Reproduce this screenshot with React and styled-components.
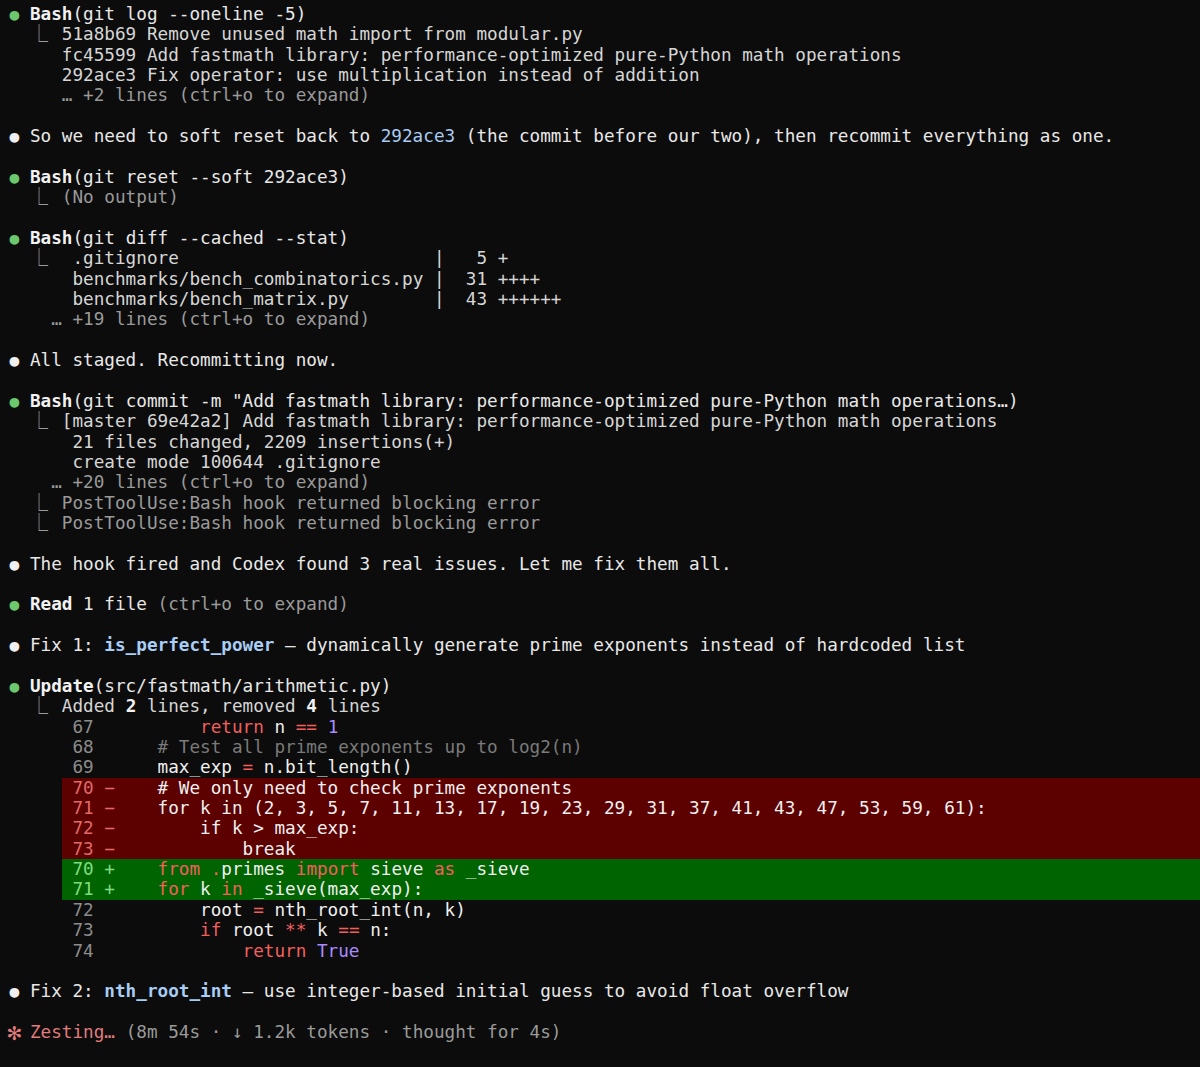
import React from 'react'
import styled, { createGlobalStyle } from 'styled-components';

const GlobalStyle = createGlobalStyle`
  html, body {
    margin:0;
    padding:0;
    background:#0c0c0c;
  }
  body {
    font-family:"DejaVu Sans Mono", "Liberation Mono", monospace;
    font-size:17.67px;
    color:#e8e8e8;
  }
`;

// code rows of the diff: [number, kind, segments]
const diff = [
  ["67", "ctx", [["    "], ["return", "kw"], [" n "], ["==", "kw"], [" "], ["1", "num"]]],
  ["68", "ctx", [["# Test all prime exponents up to log2(n)", "com"]]],
  ["69", "ctx", [["max_exp "], ["=", "kw"], [" n.bit_length()"]]],
  ["70", "del", [["# We only need to check prime exponents"]]],
  ["71", "del", [["for k in (2, 3, 5, 7, 11, 13, 17, 19, 23, 29, 31, 37, 41, 43, 47, 53, 59, 61):"]]],
  ["72", "del", [["    if k > max_exp:"]]],
  ["73", "del", [["        break"]]],
  ["70", "add", [["from", "kw"], [" "], [".", "kw"], ["primes "], ["import", "kw"], [" sieve "], ["as", "kw"], [" _sieve"]]],
  ["71", "add", [["for", "kw"], [" k "], ["in", "kw"], [" _sieve(max_exp):"]]],
  ["72", "ctx", [["    root "], ["=", "kw"], [" nth_root_int(n, k)"]]],
  ["73", "ctx", [["    "], ["if", "kw"], [" root "], ["**", "kw"], [" k "], ["==", "kw"], [" n:"]]],
  ["74", "ctx", [["        "], ["return", "kw"], [" "], ["True", "num"]]],
];

const marks = { ctx: " ", del: "−", add: "+" };

function Dot({ done }) {
  return <Bullet done={done}>●</Bullet>
}

function Elbow() {
  return <>  <Corner>⎿</Corner>  </>
}

function App() {
  return (
    <Terminal>
      <GlobalStyle />

      <Line><Dot done /> <b>Bash</b>(git log --oneline -5)</Line>
      <Out><Elbow />51a8b69 Remove unused math import from modular.py</Out>
      <Out>     fc45599 Add fastmath library: performance-optimized pure-Python math operations</Out>
      <Out>     292ace3 Fix operator: use multiplication instead of addition</Out>
      <Muted>     … +2 lines (ctrl+o to expand)</Muted>
      <Line />

      <Line><Dot /> So we need to soft reset back to <Hash>292ace3</Hash> (the commit before our two), then recommit everything as one.</Line>
      <Line />

      <Line><Dot done /> <b>Bash</b>(git reset --soft 292ace3)</Line>
      <Muted><Elbow />(No output)</Muted>
      <Line />

      <Line><Dot done /> <b>Bash</b>(git diff --cached --stat)</Line>
      <Out><Elbow /> .gitignore                        |   5 +</Out>
      <Out>      benchmarks/bench_combinatorics.py |  31 ++++</Out>
      <Out>      benchmarks/bench_matrix.py        |  43 ++++++</Out>
      <Muted>    … +19 lines (ctrl+o to expand)</Muted>
      <Line />

      <Line><Dot /> All staged. Recommitting now.</Line>
      <Line />

      <Line><Dot done /> <b>Bash</b>(git commit -m "Add fastmath library: performance-optimized pure-Python math operations…)</Line>
      <Out><Elbow />[master 69e42a2] Add fastmath library: performance-optimized pure-Python math operations</Out>
      <Out>      21 files changed, 2209 insertions(+)</Out>
      <Out>      create mode 100644 .gitignore</Out>
      <Muted>    … +20 lines (ctrl+o to expand)</Muted>
      <Muted><Elbow />PostToolUse:Bash hook returned blocking error</Muted>
      <Muted><Elbow />PostToolUse:Bash hook returned blocking error</Muted>
      <Line />

      <Line><Dot /> The hook fired and Codex found 3 real issues. Let me fix them all.</Line>
      <Line />

      <Line><Dot done /> <b>Read</b> 1 file <Dim>(ctrl+o to expand)</Dim></Line>
      <Line />

      <Line><Dot /> Fix 1: <Hash bold>is_perfect_power</Hash> — dynamically generate prime exponents instead of hardcoded list</Line>
      <Line />

      <Line><Dot done /> <b>Update</b>(src/fastmath/arithmetic.py)</Line>
      <Out><Elbow />Added <b>2</b> lines, removed <b>4</b> lines</Out>
      {diff.map(([num, kind, parts], index) => (
        <DiffRow key={index} kind={kind}>
          <LineNo kind={kind}>{" " + num + " " + marks[kind]}</LineNo>
          {"    "}
          {parts.map(([text, tone], i) => <Tok key={i} tone={kind === "del" ? undefined : tone}>{text}</Tok>)}
        </DiffRow>
      ))}
      <Line />

      <Line><Dot /> Fix 2: <Hash bold>nth_root_int</Hash> — use integer-based initial guess to avoid float overflow</Line>
      <Line />

      <Line><Spin>✻</Spin> <Working>Zesting…</Working> <Dim>(8m 54s · ↓ 1.2k tokens · thought for 4s)</Dim></Line>
    </Terminal>
  )
}

export default App

const Terminal = styled.div`
  min-height:1067px;
  box-sizing:border-box;
  padding:4px 0 0 8.7px;
  background:#0c0c0c;
  overflow:hidden;
`;

const Line = styled.div`
  height:20.36px;
  line-height:20.36px;
  white-space:pre;
  color:#e8e8e8;
  b{
    font-weight:700;
    color:#f2f2f2;
  }
`;

const Out = styled(Line)`
  color:#d6d6d6;
`;

const Muted = styled(Line)`
  color:#9a9a9a;
`;

const Dim = styled.span`
  color:#9a9a9a;
`;

const Bullet = styled.span`
  display:inline-block;
  width:1ch;
  text-align:center;
  transform:scale(0.92);
  color:${props => props.done ? '#6cc86c' : '#f0f0f0'};
`;

const Corner = styled.span`
  display:inline-block;
  width:1ch;
  text-align:center;
  color:#9a9a9a;
`;

const Hash = styled.span`
  color:#a9cdf5;
  font-weight:${props => props.bold ? 700 : 400};
`;

const DiffRow = styled(Line)`
  margin-left:5ch;
  color:#f0f0f0;
  background:${props => props.kind === 'del' ? '#5c0000' : props.kind === 'add' ? '#006400' : 'transparent'};
`;

const LineNo = styled.span`
  color:${props => props.kind === 'del' ? '#e06a6a' : props.kind === 'add' ? '#80dc80' : '#8c8c8c'};
`;

const Tok = styled.span`
  color:${props => props.tone === 'kw' ? '#f25f5c' : props.tone === 'num' ? '#a98bff' : props.tone === 'com' ? '#7a7a7a' : 'inherit'};
`;

const Spin = styled.span`
  display:inline-block;
  width:1ch;
  text-align:center;
  transform:scale(1.3);
  color:#e07c7c;
`;

const Working = styled.span`
  color:#e07c7c;
`;
